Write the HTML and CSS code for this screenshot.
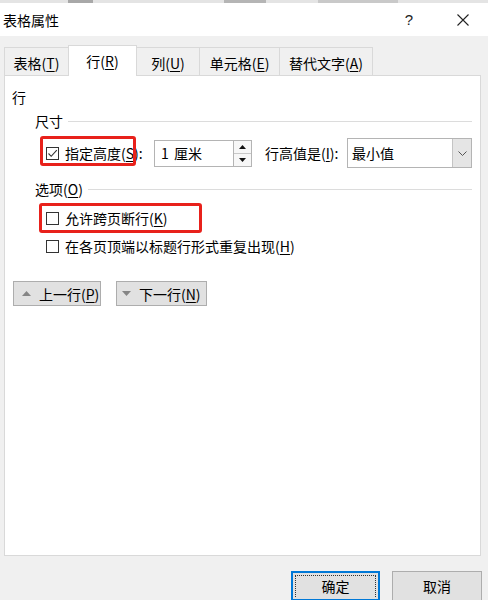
FILE: index.html
```html
<!DOCTYPE html>
<html>
<head>
<meta charset="utf-8">
<link rel="stylesheet" href="styles.css">
</head>
<body>
<div class="window">
  <div class="topstrip">
    <span class="seg seg-a"></span>
    <span class="seg seg-b"></span>
    <span class="seg seg-c"></span>
  </div>
  <div class="titlebar">
    <span class="title">表格属性</span>
    <span class="help">?</span>
    <span class="close">
      <svg width="12" height="12" viewBox="0 0 12 12"><path d="M0.5 0.5 L11.5 11.5 M11.5 0.5 L0.5 11.5" stroke="#222" stroke-width="1.1" fill="none"/></svg>
    </span>
  </div>
  <div class="content">
    <div class="tabs">
      <div class="tab tab-1">表格(<u>T</u>)</div>
      <div class="tab tab-2 active">行(<u>R</u>)</div>
      <div class="tab tab-3">列(<u>U</u>)</div>
      <div class="tab tab-4">单元格(<u>E</u>)</div>
      <div class="tab tab-5">替代文字(<u>A</u>)</div>
    </div>
    <div class="panel">
      <div class="heading">行</div>
      <div class="group">
        <div class="legend"><span>尺寸</span><span class="rule"></span></div>
        <div class="size-row">
          <span class="cb"><svg width="11" height="11" viewBox="0 0 11 11"><path d="M1.5 5.5 L4.2 8.3 L9.8 2.2" stroke="#333" stroke-width="1.1" fill="none"/></svg></span>
          <span class="lbl lbl-height">指定高度(<u>S</u>):</span>
          <span class="spin">
            <span class="spin-field">1 厘米</span>
            <span class="spin-btns">
              <span class="spin-btn"><svg width="7" height="4" viewBox="0 0 7 4"><path d="M0 4 L3.5 0 L7 4 Z" fill="#111"/></svg></span>
              <span class="spin-btn"><svg width="7" height="4" viewBox="0 0 7 4"><path d="M0 0 L3.5 4 L7 0 Z" fill="#111"/></svg></span>
            </span>
          </span>
          <span class="lbl lbl-rule">行高值是(<u>I</u>):</span>
          <span class="select">
            <span class="select-text">最小值</span>
            <span class="select-btn"><svg width="9" height="5" viewBox="0 0 9 5"><path d="M0.5 0.5 L4.5 4.5 L8.5 0.5" stroke="#555" stroke-width="1" fill="none"/></svg></span>
          </span>
        </div>
        <div class="legend legend-2"><span>选项(<u>O</u>)</span><span class="rule"></span></div>
        <div class="opt-row opt-first">
          <span class="cb"></span>
          <span class="lbl">允许跨页断行(<u>K</u>)</span>
        </div>
        <div class="opt-row">
          <span class="cb"></span>
          <span class="lbl">在各页顶端以标题行形式重复出现(<u>H</u>)</span>
        </div>
      </div>
      <div class="nav">
        <span class="btn nav-prev"><svg width="9" height="5" viewBox="0 0 9 5"><path d="M0 5 L4.5 0 L9 5 Z" fill="#858585"/></svg><span class="btn-text">上一行(<u>P</u>)</span></span>
        <span class="btn nav-next"><svg width="9" height="5" viewBox="0 0 9 5"><path d="M0 0 L4.5 5 L9 0 Z" fill="#858585"/></svg><span class="btn-text">下一行(<u>N</u>)</span></span>
      </div>
      <div class="mark mark-1"></div>
      <div class="mark mark-2"></div>
    </div>
    <div class="footer">
      <span class="btn dlg-btn ok"><span class="focus">确定</span></span>
      <span class="btn dlg-btn cancel">取消</span>
    </div>
  </div>
</div>
</body>
</html>
```

FILE: styles.css
```css
* { box-sizing: border-box; }
html, body { margin: 0; padding: 0; }
body { width: 488px; height: 600px; overflow: hidden; background: #f0f0f0; }
.window {
  width: 488px; height: 600px; overflow: hidden;
  font-family: "Noto Sans CJK SC", "Noto Sans", sans-serif;
  font-size: 14px; color: #000;
}
u { text-decoration: underline; text-underline-offset: 2px; }

.topstrip { height: 3px; background: #e4e4e4; position: relative; display: flex; }
.seg { display: block; height: 3px; }
.seg-a { margin-left: 68px; width: 25px; background: #a8a8a8; }
.seg-b { margin-left: 131px; width: 42px; background: #b5b5b5; }
.seg-c { margin-left: 52px; width: 80px; background: #c9c9c9; }

.titlebar {
  height: 33px; background: #fff; display: flex; align-items: center;
}
.title { padding-left: 3px; font-size: 14px; }
.help { margin-left: auto; font-family: "Liberation Sans", sans-serif; font-size: 15px; color: #222; margin-right: 44px; }
.close { width: 12px; height: 12px; display: flex; margin-right: 19px; }

.content { height: 564px; background: #f0f0f0; padding-top: 9px; }

.tabs {
  height: 30px; margin-left: 4px; display: flex; align-items: flex-end;
  position: relative; z-index: 2;
}
.tab {
  height: 28px; border: 1px solid #d9d9d9; border-bottom: none;
  background: #f0f0f0; display: flex; align-items: center; justify-content: center;
  margin-right: -1px; padding-top: 2px;
}
.tab-1 { width: 65px; }
.tab-2 { width: 69px; }
.tab-3 { width: 64px; }
.tab-4 { width: 81px; }
.tab-5 { width: 94px; }
.tab.active { height: 31px; margin-bottom: -1px; background: #fff; padding-top: 0; }

.panel {
  position: relative; margin-left: 4px; width: 477px; height: 481px;
  border: 1px solid #d9d9d9; background: #fff; padding: 11px 8px 0 7px;
}
.heading { line-height: 20px; height: 20px; }
.group { margin-left: 23px; }
.legend { display: flex; align-items: center; height: 20px; margin-top: 4px; }
.legend .rule { flex: 1; height: 1px; background: #dcdcdc; margin-left: 5px; }
.legend-2 { margin-top: 11px; }

.size-row { display: flex; align-items: center; height: 30px; margin-top: 7px; }
.cb {
  width: 13px; height: 13px; border: 1px solid #333; background: #fff;
  display: flex; align-items: center; justify-content: center; margin-left: 11px; flex: none;
}
.lbl { margin-left: 6px; white-space: nowrap; }
.lbl-height { width: 89px; }
.spin { display: flex; height: 27px; }
.spin-field {
  width: 80px; height: 27px; border: 1px solid #b4b4b4; padding-left: 6px;
  display: flex; align-items: center; word-spacing: 2px;
}
.spin-btns { width: 18px; height: 27px; border: 1px solid #b4b4b4; border-left: none; display: flex; flex-direction: column; }
.spin-btn { flex: 1; display: flex; align-items: center; justify-content: center; background: #f7f7f7; }
.spin-btn + .spin-btn { border-top: 1px solid #c8c8c8; }
.lbl-rule { margin-left: 13px; width: 82px; }
.select {
  width: 125px; height: 30px; border: 1px solid #b4b4b4; display: flex;
}
.select-text { flex: 1; padding-left: 4px; display: flex; align-items: center; }
.select-btn {
  width: 19px; background: #e5e5e5; border-left: 1px solid #c4c4c4;
  display: flex; align-items: center; justify-content: center;
}

.opt-row { display: flex; align-items: center; height: 28px; }
.opt-first { margin-top: 5px; }

.nav { display: flex; gap: 15px; margin-top: 21px; margin-left: 1px; }
.btn {
  height: 25px; background: #e1e1e1; border: 1px solid #adadad;
  display: flex; align-items: center; justify-content: center;
}
.nav .btn { justify-content: flex-start; white-space: nowrap; }
.nav .btn svg { flex: none; }
.btn-text { white-space: nowrap; flex: none; }
.nav-prev { width: 88px; padding-left: 8px; }
.nav-prev svg { margin-right: 8px; }
.nav-next { width: 91px; padding-left: 5px; }
.nav-next svg { margin-right: 8px; }

.mark { position: absolute; border: 3px solid #e8211b; border-radius: 3px; }
.mark-1 { left: 35px; top: 60px; width: 96px; height: 30px; }
.mark-2 { left: 34px; top: 127px; width: 163px; height: 30px; }

.footer { display: flex; justify-content: flex-end; gap: 12px; margin-top: 15px; padding-right: 6px; }
.dlg-btn { height: 30px; width: 90px; align-items: flex-start; padding-top: 4px; }
.ok { width: 89px; border: 2px solid #0078d7; padding: 2px; align-items: stretch; }
.focus { flex: 1; border: 1px dotted #333; border-bottom: none; display: flex; justify-content: center; padding-top: 0; }
```
